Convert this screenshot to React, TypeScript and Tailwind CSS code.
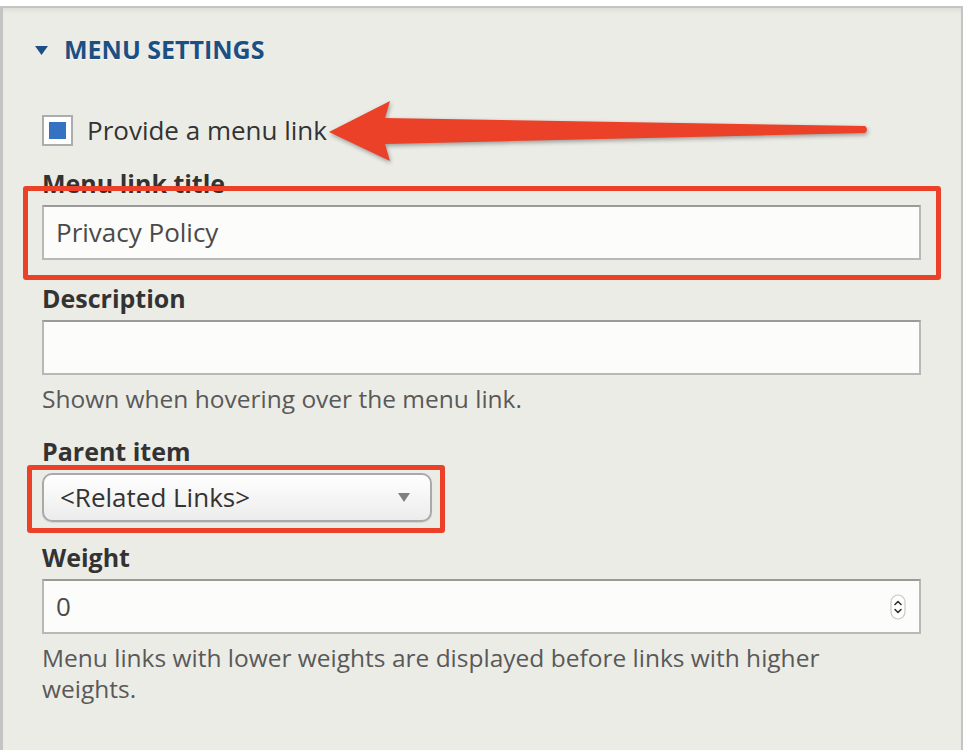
import React from 'react';

const font = { fontFamily: '"Open Sans", "Liberation Sans", sans-serif' };

const Spinner: React.FC = () => (
  <svg width="16" height="26" viewBox="0 0 16 26" className="shrink-0">
    <rect x="1" y="1" width="14" height="24" rx="7" fill="#fff" stroke="#c8c8c8" strokeWidth="1.2" />
    <path d="M5 10.5l3-3 3 3" fill="none" stroke="#333" strokeWidth="1.6" strokeLinecap="round" strokeLinejoin="round" />
    <path d="M5 15.5l3 3 3-3" fill="none" stroke="#333" strokeWidth="1.6" strokeLinecap="round" strokeLinejoin="round" />
  </svg>
);

const Label: React.FC<{ children: React.ReactNode }> = ({ children }) => (
  <div className="text-[25px] leading-[32px] font-bold text-[#333] mb-[6px]">{children}</div>
);

const Help: React.FC<{ children: React.ReactNode }> = ({ children }) => (
  <div className="max-w-[840px] text-[24.5px] leading-[31px] text-[#595959] mt-[8px]">{children}</div>
);

const inputClass =
  'w-full h-[55px] bg-[#fcfcfa] border-2 border-[#b8b8b8] border-t-[#9a9a9a] px-[12px] flex items-center text-[26px] text-[#4a4a4a]';

export default function App() {
  return (
    <div className="w-[972px] h-[750px] bg-white overflow-hidden" style={font}>
      <div className="h-[6px]" />
      <div className="relative w-[963px] h-[744px] bg-[#ecece7] border-l-[3px] border-r-[2px] border-t-[2px] border-[#c4c4c4] shadow-[inset_0_5px_5px_-3px_rgba(0,0,0,0.08)]">
        {/* heading */}
        <div className="mt-[24px] pl-[32px] flex items-center h-[36px]">
          <svg width="13" height="9" viewBox="0 0 13 9" className="mr-[16px]">
            <path d="M0 0h13L6.5 9z" fill="#1c4f82" />
          </svg>
          <span className="text-[25px] font-bold uppercase text-[#1c4f82] [text-shadow:0_1px_0_#fff]">
            Menu settings
          </span>
        </div>

        <div className="pl-[39px] pr-[40px]">
          {/* checkbox */}
          <div className="mt-[47px] flex items-center h-[31px]">
            <div className="w-[31px] h-[31px] bg-white border-2 border-[#acacac] flex items-center justify-center">
              <div className="w-[17px] h-[17px] bg-[#3672c2]" />
            </div>
            <span className="ml-[14px] text-[26px] text-[#333]">Provide a menu link</span>
          </div>

          {/* menu link title */}
          <div className="mt-[21px]">
            <Label>Menu link title</Label>
            <div className="relative">
              <div className={inputClass}>Privacy Policy</div>
              <div className="absolute -left-[19px] -top-[19px] -right-[20px] -bottom-[20px] border-[5px] border-[#ea4128] rounded-[3px] pointer-events-none" />
            </div>
          </div>

          {/* description */}
          <div className="mt-[22px]">
            <Label>Description</Label>
            <div className={inputClass + ' h-[54px]'} />
            <Help>Shown when hovering over the menu link.</Help>
          </div>

          {/* parent item */}
          <div className="mt-[21px]">
            <Label>Parent item</Label>
            <div className="relative w-[390px]">
              <div className="h-[49px] rounded-[10px] border-2 border-[#a9a9a9] bg-gradient-to-b from-white to-[#ececec] flex items-center justify-between pl-[16px] pr-[20px] text-[26px] text-[#333] shadow-[0_1px_1px_rgba(0,0,0,0.1)]">
                <span>&lt;Related Links&gt;</span>
                <svg width="12" height="9" viewBox="0 0 12 9">
                  <path d="M0 0h12L6 9z" fill="#808080" />
                </svg>
              </div>
              <div className="absolute -left-[15px] -top-[8px] -right-[13px] -bottom-[11px] border-[5px] border-[#ea4128] rounded-[3px] pointer-events-none" />
            </div>
          </div>

          {/* weight */}
          <div className="mt-[19px]">
            <Label>Weight</Label>
            <div className={inputClass + ' h-[54px] justify-between pr-[13px]'}>
              <span>0</span>
              <Spinner />
            </div>
            <Help>Menu links with lower weights are displayed before links with higher weights.</Help>
          </div>
        </div>

        {/* annotation arrow */}
        <svg
          className="absolute left-[317px] top-[87px] pointer-events-none drop-shadow-[1px_2px_2px_rgba(0,0,0,0.35)]"
          width="560"
          height="80"
          viewBox="317 87 560 80"
        >
          <path
            d="M326 124 L387 93 L382 110 L862 118 Q866 121.5 862 125 L382 136 L387 153 Z"
            fill="#ea4128"
          />
        </svg>
      </div>
    </div>
  );
}
